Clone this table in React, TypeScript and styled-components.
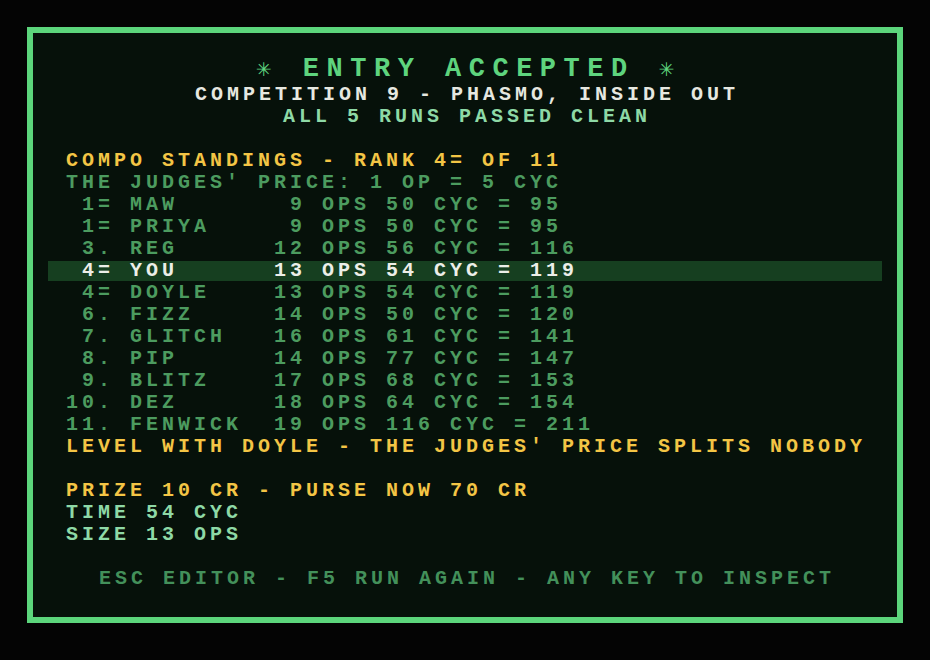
import React from "react";
import styled, { createGlobalStyle } from "styled-components";

const GlobalStyle = createGlobalStyle`
  html, body { margin: 0; padding: 0; background: #040404; }
  * { box-sizing: border-box; }
`;

const Page = styled.div`
  width: 930px;
  height: 660px;
  padding: 27px 27px 37px;
  background: #040404;
`;

const Screen = styled.div`
  height: 100%;
  border: 6px solid #5cd67c;
  background: #06110a;
  padding: 21px 15px 27px;
  display: flex;
  flex-direction: column;
  font-family: "Liberation Mono", "DejaVu Sans Mono", monospace;
  font-weight: 700;
`;

const Title = styled.div`
  height: 30px;
  line-height: 30px;
  text-align: center;
  font-size: 27px;
  letter-spacing: 7.5px;
  padding-left: 7.5px;
  color: #5ed47e;
  white-space: pre;
`;

const Star = styled.span`
  font-family: "DejaVu Sans", sans-serif;
  font-size: 19px;
  font-weight: 700;
  letter-spacing: 7.5px;
`;

type Tone = "white" | "mint" | "yellow" | "dim" | "hint";

const toneColor: Record<Tone, string> = {
  white: "#e6e8e0",
  mint: "#8ed9a6",
  yellow: "#f3c545",
  dim: "#4c9b5f",
  hint: "#43905a",
};

const Line = styled.div<{ $tone: Tone; $center?: boolean; $hi?: boolean }>`
  height: 22px;
  line-height: 22px;
  font-size: 20px;
  letter-spacing: 4px;
  white-space: pre;
  padding-right: 18px;
  padding-left: ${(p) => (p.$center ? "22px" : "18px")};
  color: ${(p) => (p.$hi ? "#eceee8" : toneColor[p.$tone])};
  text-align: ${(p) => (p.$center ? "center" : "left")};
  background: ${(p) =>
    p.$hi ? "linear-gradient(#163f20, #163f20) 0 1px / 100% 20px no-repeat" : "transparent"};
`;

const Blank = styled.div`
  height: 22px;
`;

type Entry = { rank: string; name: string; ops: number; cyc: number; you?: boolean };

const entries: Entry[] = [
  { rank: "1=", name: "MAW", ops: 9, cyc: 50 },
  { rank: "1=", name: "PRIYA", ops: 9, cyc: 50 },
  { rank: "3.", name: "REG", ops: 12, cyc: 56 },
  { rank: "4=", name: "YOU", ops: 13, cyc: 54, you: true },
  { rank: "4=", name: "DOYLE", ops: 13, cyc: 54 },
  { rank: "6.", name: "FIZZ", ops: 14, cyc: 50 },
  { rank: "7.", name: "GLITCH", ops: 16, cyc: 61 },
  { rank: "8.", name: "PIP", ops: 14, cyc: 77 },
  { rank: "9.", name: "BLITZ", ops: 17, cyc: 68 },
  { rank: "10.", name: "DEZ", ops: 18, cyc: 64 },
  { rank: "11.", name: "FENWICK", ops: 19, cyc: 116 },
];

const fmt = (e: Entry) =>
  `${e.rank.padStart(3)} ${e.name.padEnd(9)}${String(e.ops).padStart(2)} OPS ${e.cyc} CYC = ${e.ops * 5 + e.cyc}`;

export default function App() {
  return (
    <>
      <GlobalStyle />
      <Page>
        <Screen>
          <Title>
            <Star>✳</Star> ENTRY ACCEPTED <Star>✳</Star>
          </Title>
          <Line $tone="white" $center>COMPETITION 9 - PHASMO, INSIDE OUT</Line>
          <Line $tone="mint" $center>ALL 5 RUNS PASSED CLEAN</Line>
          <Blank />
          <Line $tone="yellow">COMPO STANDINGS - RANK 4= OF 11</Line>
          <Line $tone="dim">THE JUDGES' PRICE: 1 OP = 5 CYC</Line>
          {entries.map((e) => (
            <Line key={e.name} $tone="dim" $hi={e.you}>
              {fmt(e)}
            </Line>
          ))}
          <Line $tone="yellow">LEVEL WITH DOYLE - THE JUDGES' PRICE SPLITS NOBODY</Line>
          <Blank />
          <Line $tone="yellow">PRIZE 10 CR - PURSE NOW 70 CR</Line>
          <Line $tone="mint">TIME 54 CYC</Line>
          <Line $tone="mint">SIZE 13 OPS</Line>
          <Blank />
          <Line $tone="hint" $center>ESC EDITOR - F5 RUN AGAIN - ANY KEY TO INSPECT</Line>
        </Screen>
      </Page>
    </>
  );
}
